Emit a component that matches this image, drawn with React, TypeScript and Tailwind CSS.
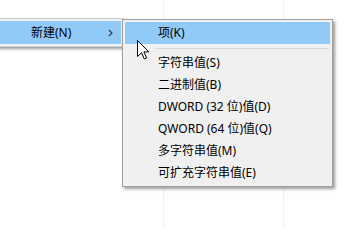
import React from 'react';

const items = [
  '字符串值(S)',
  '二进制值(B)',
  'DWORD (32 位)值(D)',
  'QWORD (64 位)值(Q)',
  '多字符串值(M)',
  '可扩充字符串值(E)',
];

const font = { fontFamily: '"Noto Sans", "Noto Sans CJK SC", sans-serif' };

const App = () => {
  return (
    <div className="relative w-[355px] h-[228px] bg-white overflow-hidden text-[12px] text-black" style={font}>
      {/* list view columns behind the menus */}
      <div className="flex h-full">
        <div className="w-[163px] h-full" />
        <div className="w-[120px] h-full border-l border-[#efefef]" />
        <div className="flex-1 h-full border-l border-[#efefef]" />
      </div>

      {/* context menu */}
      <div className="absolute left-[-3px] top-[18px] w-[127px] bg-[#f0f0f0] border border-[#cfcfcf] p-[2px] shadow-[2px_2px_3px_rgba(0,0,0,0.4)]">
        <div className="h-[23px] bg-[#91c9f7] flex items-center pl-[31px] pr-[6px] justify-between">
          <span>新建(N)</span>
          <svg width="5" height="8" viewBox="0 0 5 8" className="mr-[2px]">
            <path d="M1 1 L4 4 L1 7" fill="none" stroke="#333" strokeWidth="1.1" />
          </svg>
        </div>
      </div>

      {/* submenu */}
      <div className="absolute left-[122px] top-[19px] w-[211px] bg-[#f0f0f0] border border-[#a0a0a0] p-[2px] shadow-[2px_2px_3px_rgba(0,0,0,0.4)]">
        <div className="h-[22px] bg-[#91c9f7] flex items-center pl-[33px]">项(K)</div>
        <div className="h-[8px] flex items-center pl-[30px] pr-[1px]">
          <div className="h-px w-full bg-[#d7d7d7]" />
        </div>
        {items.map((t) => (
          <div key={t} className="h-[22px] flex items-center pl-[33px]">
            {t}
          </div>
        ))}
      </div>

      {/* mouse pointer */}
      <svg className="absolute left-[137px] top-[40px]" width="13" height="20" viewBox="0 0 13 20">
        <path
          d="M0.5 0.5 L0.5 16.5 L4.5 12.8 L7.3 19 L9.6 18 L6.9 11.9 L11.8 11.9 Z"
          fill="#fff"
          stroke="#000"
          strokeWidth="1"
          strokeLinejoin="miter"
        />
      </svg>
    </div>
  );
};

export default App;
